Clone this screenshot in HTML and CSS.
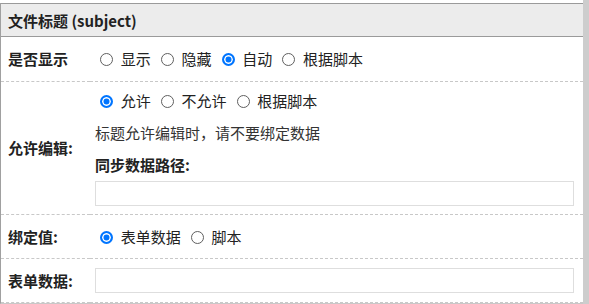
FILE: index.html
```html
<!DOCTYPE html>
<html lang="zh-CN">
<head>
    <meta charset="UTF-8">
    <title>文件标题设置</title>
    <link rel="stylesheet" href="styles.css">
</head>
<body>
    <div class="page">
        <div class="panel">
            <div class="panel-title">文件标题 (subject)</div>
            <table class="form-table">
                <tr class="row-single">
                    <th>是否显示</th>
                    <td>
                        <label><input type="radio" name="show"> 显示</label>
                        <label><input type="radio" name="show"> 隐藏</label>
                        <label><input type="radio" name="show" checked> 自动</label>
                        <label><input type="radio" name="show"> 根据脚本</label>
                    </td>
                </tr>
                <tr class="row-multi">
                    <th>允许编辑:</th>
                    <td>
                        <div class="line">
                            <label><input type="radio" name="edit" checked> 允许</label>
                            <label><input type="radio" name="edit"> 不允许</label>
                            <label><input type="radio" name="edit"> 根据脚本</label>
                        </div>
                        <div class="line tip">标题允许编辑时，请不要绑定数据</div>
                        <div class="line sub-label">同步数据路径:</div>
                        <input type="text" class="text-input">
                    </td>
                </tr>
                <tr class="row-single">
                    <th>绑定值:</th>
                    <td>
                        <label><input type="radio" name="bind" checked> 表单数据</label>
                        <label><input type="radio" name="bind"> 脚本</label>
                    </td>
                </tr>
                <tr class="row-single">
                    <th>表单数据:</th>
                    <td><input type="text" class="text-input"></td>
                </tr>
            </table>
        </div>
        <div class="scroll-track"></div>
    </div>
</body>
</html>
```

FILE: styles.css
```css
* {
    box-sizing: border-box;
}

body {
    margin: 0;
    font-family: "Noto Sans CJK SC", "Noto Sans", sans-serif;
    font-size: 15px;
    color: #222;
    background-color: #fff;
}

.page {
    display: flex;
    height: 304px;
    overflow: hidden;
}

.panel {
    flex: 1;
    margin-top: 3px;
    border-left: 1px solid #a0a0a0;
    border-bottom: 1px solid #c8c8c8;
    align-self: flex-start;
}

.panel-title {
    height: 34px;
    line-height: 32px;
    padding: 1px 0 0 7px;
    font-weight: bold;
    background-color: #ececec;
    border-top: 1px solid #9a9a9a;
    border-bottom: 1px solid #9a9a9a;
}

.scroll-track {
    width: 6px;
    background-color: #cdcdcd;
}

.form-table {
    width: 100%;
    border-collapse: collapse;
}

.form-table th {
    width: 89px;
    padding-left: 7px;
    text-align: left;
    font-weight: bold;
    vertical-align: middle;
    border-bottom: 1px dashed #c8c8c8;
}

.form-table td {
    padding: 0 9px 0 5px;
    vertical-align: middle;
    word-spacing: 1.5px;
    border-bottom: 1px dashed #c8c8c8;
}

.row-single td {
    height: 44px;
}

.row-multi td {
    padding-top: 3px;
    padding-bottom: 8px;
}

.line {
    line-height: 32px;
}

.tip {
    color: #333;
}

.sub-label {
    font-weight: bold;
}

label {
    white-space: nowrap;
}

/* 单选框：自绘成浏览器默认样式的大小 */
input[type="radio"] {
    appearance: none;
    -webkit-appearance: none;
    display: inline-block;
    width: 13px;
    height: 13px;
    margin: 0 3px 0 5px;
    border: 1px solid #5f5f5f;
    border-radius: 50%;
    background-color: #fff;
    vertical-align: -1px;
}

input[type="radio"]:checked {
    border: 2px solid #0075ff;
    background-color: #0075ff;
    box-shadow: inset 0 0 0 1.5px #fff;
}

.text-input {
    display: block;
    width: 100%;
    height: 25px;
    border: 1px solid #dedede;
    outline: none;
}
```
